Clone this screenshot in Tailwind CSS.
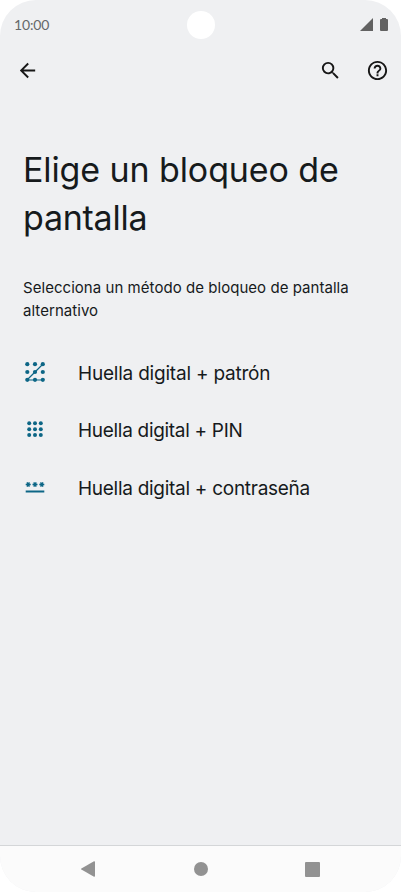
<!DOCTYPE html>
<html lang="es">
<head>
<meta charset="utf-8">
<title>Elige un bloqueo de pantalla</title>
<script src="https://cdn.jsdelivr.net/npm/@tailwindcss/browser@4"></script>
</head>
<body class="bg-white font-['Inter',sans-serif]">
<div class="w-[401px] h-[892px] rounded-[36px] overflow-hidden bg-[#eff0f2] flex flex-col text-[#161a1c]">
  <header class="h-[49px] shrink-0 grid grid-cols-3 items-center pl-[14px] pr-[13px] text-[#66686a]">
    <span class="text-[14px] font-['Lato',sans-serif] tracking-[-0.15px] leading-none">10:00</span>
    <span class="size-[28px] rounded-full bg-white justify-self-center"></span>
    <span class="flex justify-end items-center gap-[7px] text-[#626262]">
      <svg class="w-[13px] h-[13px]" viewBox="0 0 13 13" fill="currentColor"><path d="M0 13L13 0V13Z"/></svg>
      <svg class="w-[8px] h-[13px]" viewBox="0 0 8 13" fill="currentColor"><path d="M2 0H6V1H7Q8 1 8 2V12Q8 13 7 13H1Q0 13 0 12V2Q0 1 1 1H2Z"/></svg>
    </span>
  </header>
  <nav class="h-[42px] shrink-0 flex items-center pl-[16px] pr-[12px] text-[#171717]">
    <svg class="size-[23px]" viewBox="0 0 24 24" fill="currentColor"><path d="M20 11H7.83l5.59-5.59L12 4l-8 8 8 8 1.41-1.41L7.83 13H20v-2z"/></svg>
    <svg class="size-[23px] ml-auto" viewBox="0 0 24 24" fill="currentColor"><path d="M15.5 14h-.79l-.28-.27A6.471 6.471 0 0 0 16 9.5 6.5 6.5 0 1 0 9.5 16c1.61 0 3.09-.59 4.23-1.57l.27.28v.79l5 4.99L20.49 19l-4.99-5zm-6 0C7.01 14 5 11.99 5 9.5S7.01 5 9.5 5 14 7.01 14 9.5 11.99 14 9.5 14z"/></svg>
    <svg class="size-[23px] ml-[24px]" viewBox="0 0 24 24" fill="currentColor"><path d="M11 18h2v-2h-2v2zm1-16C6.48 2 2 6.48 2 12s4.48 10 10 10 10-4.48 10-10S17.52 2 12 2zm0 18c-4.41 0-8-3.59-8-8s3.59-8 8-8 8 3.59 8 8-3.59 8-8 8zm0-14c-2.21 0-4 1.79-4 4h2c0-1.1.9-2 2-2s2 .9 2 2c0 2-3 1.75-3 5h2c0-2.25 3-2.5 3-5 0-2.21-1.79-4-4-4z"/></svg>
  </nav>
  <main class="flex-1 px-[23px] pt-[55px]">
    <h1 class="text-[34px] leading-[48px] tracking-[-0.1px] whitespace-nowrap"><span class="block">Elige un bloqueo de</span><span class="block tracking-[-0.25px]">pantalla</span></h1>
    <p class="mt-[34px] text-[15px] leading-[23px] tracking-[0.045px] whitespace-nowrap"><span class="block">Selecciona un método de bloqueo de pantalla</span><span class="block">alternativo</span></p>
    <ul class="mt-[22px] text-[19px]">
      <li class="h-[57.5px] flex items-center">
        <svg class="w-[24px] h-[24px] text-[#0d6686]" viewBox="0 0 24 24" fill="currentColor"><path d="M20 3L4 19H20" fill="none" stroke="currentColor" stroke-width="1.2"/><circle cx="4.3" cy="3.2" r="2.1"/><circle cx="12" cy="3.2" r="2.1"/><circle cx="19.8" cy="3.2" r="2.1"/><circle cx="4.3" cy="11" r="2.1"/><circle cx="12" cy="11" r="2.1"/><circle cx="19.8" cy="11" r="2.1"/><circle cx="4.3" cy="18.8" r="2.1"/><circle cx="12" cy="18.8" r="2.1"/><circle cx="19.8" cy="18.8" r="2.1"/></svg>
        <span class="ml-[31px] pt-[2px] tracking-[-0.21px]">Huella digital + patrón</span>
      </li>
      <li class="h-[57.5px] flex items-center">
        <svg class="w-[24px] h-[24px] text-[#0d6686]" viewBox="0 0 24 24" fill="currentColor"><circle cx="6.2" cy="5.3" r="2"/><circle cx="12" cy="5.3" r="2"/><circle cx="17.8" cy="5.3" r="2"/><circle cx="6.2" cy="11.2" r="2"/><circle cx="12" cy="11.2" r="2"/><circle cx="17.8" cy="11.2" r="2"/><circle cx="6.2" cy="17" r="2"/><circle cx="12" cy="17" r="2"/><circle cx="17.8" cy="17" r="2"/></svg>
        <span class="ml-[31px] pt-[2px] tracking-[-0.3px]">Huella digital + PIN</span>
      </li>
      <li class="h-[57.5px] flex items-center">
        <svg class="w-[24px] h-[24px] text-[#0d6686]" viewBox="0 0 24 24" fill="none" stroke="currentColor"><path d="M2.7 15.5H21.3" stroke-width="2"/><path d="M2.7 8.5H7.7M4 6.3L6.4 10.7M6.4 6.3L4 10.7M9.5 8.5H14.5M10.8 6.3L13.2 10.7M13.2 6.3L10.8 10.7M16.3 8.5H21.3M17.6 6.3L20 10.7M20 6.3L17.6 10.7" stroke-width="1.4"/></svg>
        <span class="ml-[31px] pt-[2px] tracking-[-0.28px]">Huella digital + contraseña</span>
      </li>
    </ul>
  </main>
  <footer class="h-[47px] shrink-0 bg-[#fbfbfb] border-t border-[#d4d6d8] flex items-center justify-between px-[81px] text-[#929292]">
    <svg class="w-[14px] h-[16px]" viewBox="0 0 14 16" fill="currentColor"><path d="M.4 7.4L13 .2Q14 0 14 1V15Q14 16 13 15.8L.4 8.6Q-.3 8 .4 7.4Z"/></svg>
    <span class="size-[14px] ml-px rounded-full bg-[#929292]"></span>
    <span class="size-[15px] rounded-[1px] bg-[#929292]"></span>
  </footer>
</div>
</body>
</html>
